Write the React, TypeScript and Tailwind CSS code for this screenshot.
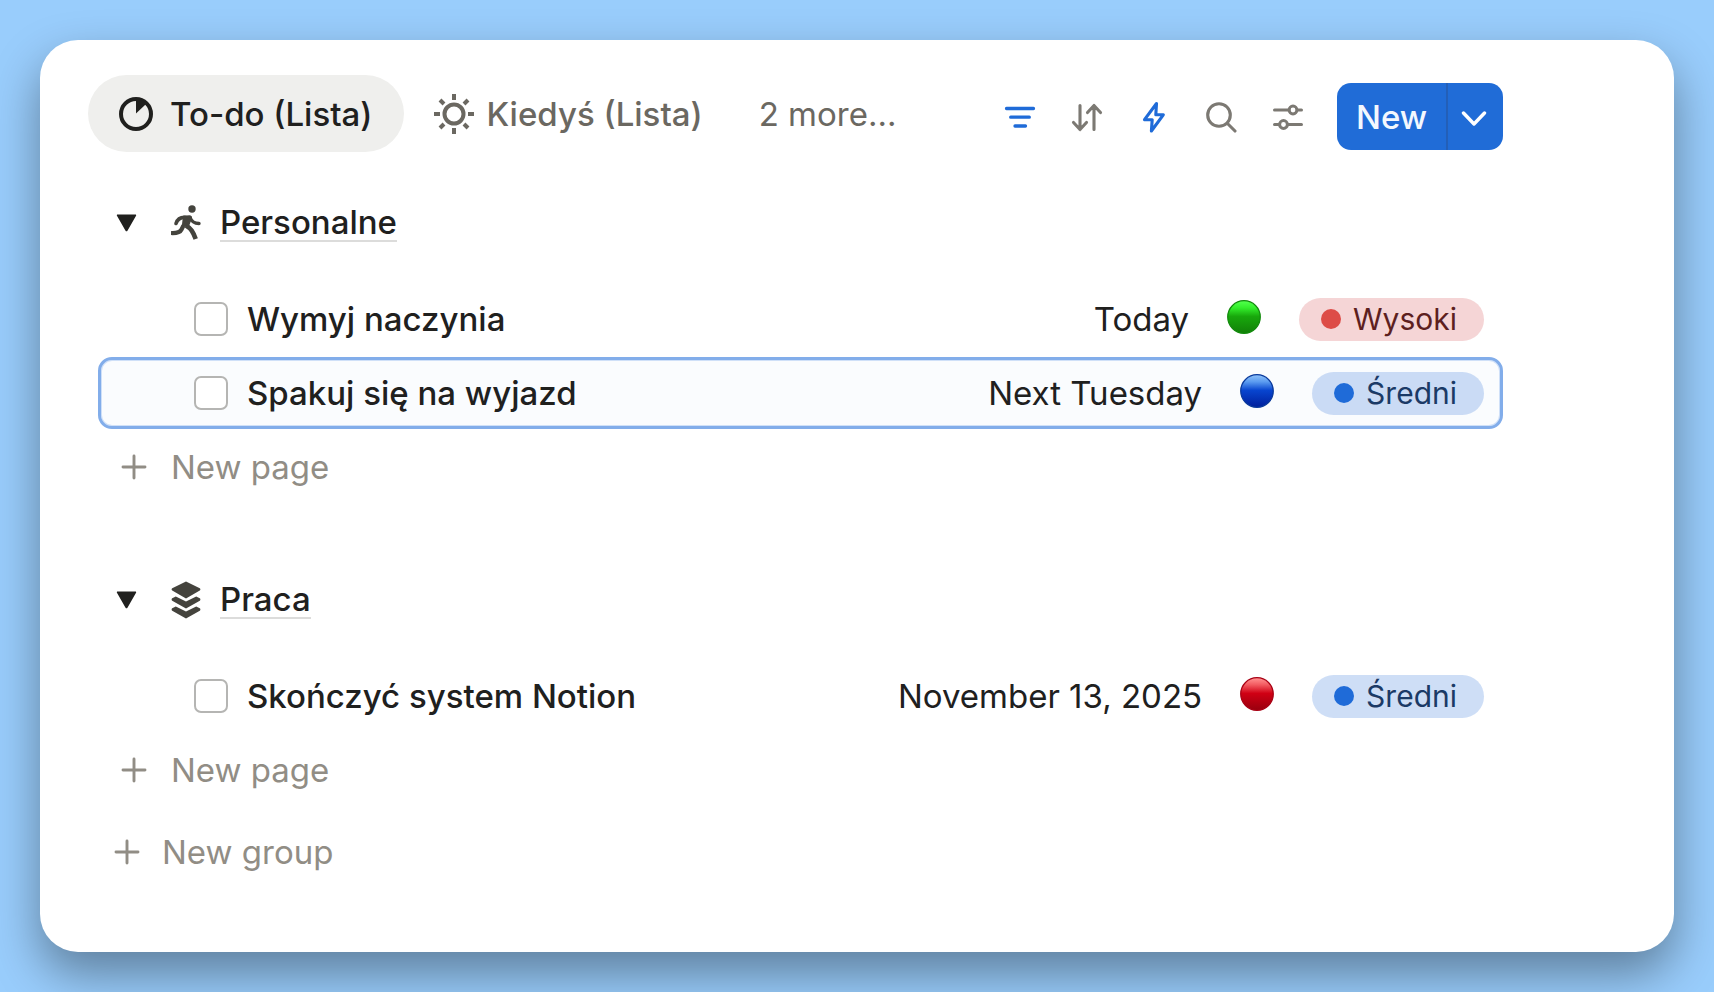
import { useState } from "react";
import type { ReactNode } from "react";
import clsx from "clsx";

type Priority = "Wysoki" | "Średni";
type Light = "green" | "blue" | "red";

interface Task {
  id: string;
  title: string;
  date: string;
  light: Light;
  priority: Priority;
  selected?: boolean;
}

interface Group {
  id: string;
  name: string;
  icon: ReactNode;
  tasks: Task[];
}

const LIGHTS: Record<Light, { edge: string; stops: [string, string, string, string] }> = {
  green: { edge: "#128a0c", stops: ["#4dff48", "#33ee2b", "#18a80c", "#128008"] },
  blue: { edge: "#0a3a9c", stops: ["#86bbf8", "#5a9bf0", "#0845cf", "#001f9c"] },
  red: { edge: "#a80014", stops: ["#ff8a8a", "#f25a60", "#d00014", "#98000e"] },
};

function ClockIcon() {
  return (
    <svg width="34" height="34" viewBox="0 0 34 34" fill="none" aria-hidden="true">
      <circle cx="17" cy="17" r="15" stroke="currentColor" strokeWidth="4" />
      <path d="M17 2v14.5L27.6 6.4A15 15 0 0 0 17 2Z" fill="currentColor" />
    </svg>
  );
}

function SunIcon() {
  return (
    <svg width="40" height="40" viewBox="0 0 40 40" fill="none" stroke="currentColor" strokeWidth="4" aria-hidden="true">
      <circle cx="20" cy="20" r="9.5" />
      <path d="M20 0v6M20 34v6M0 20h6M34 20h6M6 6l4 4M30 30l4 4M6 34l4-4M30 10l4-4" />
    </svg>
  );
}

function FilterIcon() {
  return (
    <svg width="32" height="32" viewBox="0 0 32 32" fill="none" stroke="currentColor" strokeWidth="3.3" strokeLinecap="round" aria-hidden="true">
      <path d="M2.5 7.5h27M6.700 16.200h18.600M11 25h10.500" />
    </svg>
  );
}

function SortIcon() {
  return (
    <svg width="32" height="32" viewBox="0 0 32 32" fill="none" stroke="currentColor" strokeWidth="3.1" strokeLinecap="round" strokeLinejoin="round" aria-hidden="true">
      <path d="M9 4.500v24M2.500 21.500l6.500 7 6.500-7M23 28.500V4.500M16.500 11.500l6.500-7 6.500 7" />
    </svg>
  );
}

function BoltIcon() {
  return (
    <svg width="32" height="32" viewBox="0 0 32 32" fill="none" stroke="currentColor" strokeWidth="3.100" strokeLinejoin="round" aria-hidden="true">
      <path d="M18.500 2.500L6.500 18.700h7.700l-.8 11.300L25.300 13.800h-7.500z" />
    </svg>
  );
}

function SearchIcon() {
  return (
    <svg width="32" height="32" viewBox="0 0 32 32" fill="none" stroke="currentColor" strokeWidth="3.100" strokeLinecap="round" aria-hidden="true">
      <circle cx="14" cy="14" r="11.300" />
      <path d="M22.500 22.500l7.500 7.500" />
    </svg>
  );
}

function SettingsIcon() {
  return (
    <svg width="32" height="32" viewBox="0 0 32 32" fill="none" stroke="currentColor" strokeWidth="3" strokeLinecap="round" aria-hidden="true">
      <path d="M2.500 9h14.500M26 9h3.500M2.500 23.500h4M16 23.500h13.500" />
      <circle cx="21" cy="9" r="3.900" />
      <circle cx="11.500" cy="23.500" r="3.900" />
    </svg>
  );
}

function RunnerIcon() {
  return (
    <svg width="30" height="36" viewBox="0 0 30 36" aria-hidden="true">
      <circle cx="21" cy="4" r="3.700" fill="currentColor" />
      <path d="M5 18.500C6.500 14 10 12 15 12.500" fill="none" stroke="currentColor" strokeWidth="3.600" strokeLinecap="round" />
      <path d="M19 12.500c1.500 4 4 6 9 6" fill="none" stroke="currentColor" strokeWidth="3.400" strokeLinecap="round" />
      <path d="M12 10.800l6.500-.5c2.300.300 3 2 2.200 3.700L17.500 22.500l-6.700-1.500z" fill="currentColor" />
      <path d="M0 28c6 .3 9-.3 10.500-3.500l2-4" fill="none" stroke="currentColor" strokeWidth="4.200" />
      <path d="M15 20.500c5 3 7 6 9.700 13.500" fill="none" stroke="currentColor" strokeWidth="4.600" />
    </svg>
  );
}

function StackIcon() {
  return (
    <svg width="30" height="38" viewBox="0 0 30 38" fill="currentColor" aria-hidden="true">
      <path d="M15 .5l13.800 6.700c.8.400.8 1.900 0 2.300L15 17.500 1.200 9.500c-.8-.4-.8-1.900 0-2.300z" />
      <path d="M1.200 17.200l3.600-1.700L15 20.500l10.200-5 3.600 1.700c.8.400.8 2.100 0 2.500L15 27.500 1.200 19.700c-.8-.4-.8-2.100 0-2.500z" />
      <path d="M1.200 27.200l3.600-1.700L15 30.500l10.200-5 3.600 1.700c.8.400.8 2.100 0 2.500L15 37.500 1.200 29.700c-.8-.4-.8-2.100 0-2.500z" />
    </svg>
  );
}

function PlusIcon() {
  return (
    <svg width="26" height="26" viewBox="0 0 26 26" fill="none" stroke="currentColor" strokeWidth="2.900" strokeLinecap="round" aria-hidden="true">
      <path d="M13 2v22M2 13h22" />
    </svg>
  );
}

function StatusLight({ color }: { color: Light }) {
  const { edge, stops } = LIGHTS[color];
  return (
    <svg className="-mt-1" width="34" height="34" viewBox="0 0 34 34" role="img" aria-label={color}>
      <defs>
        <linearGradient id={`light-${color}`} x1="0" y1="0" x2="0" y2="1">
          <stop offset="0.04" stopColor={stops[0]} />
          <stop offset="0.22" stopColor={stops[1]} />
          <stop offset="0.48" stopColor={stops[2]} />
          <stop offset="1" stopColor={stops[3]} />
        </linearGradient>
      </defs>
      <circle cx="17" cy="17" r="16.300" fill={`url(#light-${color})`} stroke={edge} strokeWidth="1.200" />
    </svg>
  );
}

function PriorityTag({ value }: { value: Priority }) {
  const high = value === "Wysoki";
  return (
    <span
      className={clsx(
        "flex h-[43px] items-center gap-3 rounded-full pl-[22px] pr-[27px] text-[30px] leading-none",
        high ? "bg-[#f5d5d6] text-[#5d1f1f]" : "bg-[#1f6bd8]/22 text-[#1b3a66]",
      )}
    >
      <span className={clsx("h-5 w-5 rounded-full", high ? "bg-[#dd4c47]" : "bg-[#1f6bd8]")} />
      {value}
    </span>
  );
}

function TaskRow({ task }: { task: Task }) {
  const [done, setDone] = useState(false);

  return (
    <li
      className={clsx(
        "flex h-[72px] items-center rounded-[14px] border-[3px] pl-[93px] pr-4",
        task.selected
          ? "border-[#82adea] bg-[#fafcfe] shadow-[inset_0_0_0_1px_#cfe0f8]"
          : "border-transparent",
      )}
    >
      <input
        id={task.id}
        type="checkbox"
        checked={done}
        onChange={(e) => setDone(e.target.checked)}
        className="h-[34px] w-[34px] shrink-0 appearance-none rounded-[7px] border-2 border-[#b5b5b3] bg-white checked:border-[#1f6bd8] checked:bg-[#1f6bd8]"
      />
      <label htmlFor={task.id} className="ml-[19px] font-medium">
        {task.title}
      </label>
      <div className="ml-auto flex items-center gap-[38px]">
        <span>{task.date}</span>
        <StatusLight color={task.light} />
        <PriorityTag value={task.priority} />
      </div>
    </li>
  );
}

function GroupSection({ group }: { group: Group }) {
  const [open, setOpen] = useState(true);

  return (
    <section>
      <div className="flex h-[72px] items-center pl-[18px]">
        <button type="button" aria-label={`Toggle ${group.name}`} onClick={() => setOpen(!open)}>
          <svg width="21" height="18" viewBox="0 0 22 18" fill="#20201e" className={clsx(!open && "-rotate-90")}>
            <path d="M1.800 0h18.400c.9 0 1.200.7.800 1.400l-9 15.600c-.5.900-1.500.9-2 0L1 1.400C.6.700.9 0 1.800 0z" />
          </svg>
        </button>
        <span className="ml-[34px] mr-[19px] text-[#44433d]">{group.icon}</span>
        <h2>
          <a href="#" className="block border-b-2 border-[#dcdcdb] font-medium leading-9">
            {group.name}
          </a>
        </h2>
      </div>
      {open && (
        <>
          <ul className="mt-6 flex flex-col gap-0.5">
            {group.tasks.map((task) => (
              <TaskRow key={task.id} task={task} />
            ))}
          </ul>
          <button type="button" className="mt-0.5 flex h-[72px] items-center gap-6 pl-[23px] text-[#918d85]">
            <PlusIcon />
            New page
          </button>
        </>
      )}
    </section>
  );
}

const GROUPS: Group[] = [
  {
    id: "personal",
    name: "Personalne",
    icon: <RunnerIcon />,
    tasks: [
      { id: "dishes", title: "Wymyj naczynia", date: "Today", light: "green", priority: "Wysoki" },
      { id: "packing", title: "Spakuj się na wyjazd", date: "Next Tuesday", light: "blue", priority: "Średni", selected: true },
    ],
  },
  {
    id: "work",
    name: "Praca",
    icon: <StackIcon />,
    tasks: [
      { id: "notion", title: "Skończyć system Notion", date: "November 13, 2025", light: "red", priority: "Średni" },
    ],
  },
];

const TOOLS = [
  { label: "Filter", icon: <FilterIcon />, active: true },
  { label: "Sort", icon: <SortIcon />, active: false },
  { label: "Automations", icon: <BoltIcon />, active: true },
  { label: "Search", icon: <SearchIcon />, active: false },
  { label: "Settings", icon: <SettingsIcon />, active: false },
];

export default function App() {
  return (
    <div className="flex min-h-screen bg-[#99cdfc] p-10 font-['Inter',sans-serif] text-[33px] leading-10 text-[#20201e]">
      <main className="flex-1 rounded-[38px] bg-white pb-16 pl-12 pr-[171px] pt-[35px] shadow-[0_22px_48px_rgba(0,0,0,0.38)]">
        <header className="flex items-start">
          <nav className="flex items-center whitespace-nowrap text-[#6b6861]">
            <button type="button" className="flex h-[77px] items-center gap-[17px] rounded-full bg-[#efefed] px-[31px] font-medium text-[#20201e]">
              <ClockIcon />
              To-do (Lista)
            </button>
            <button type="button" className="ml-[30px] flex items-center gap-[13px] font-medium">
              <SunIcon />
              Kiedyś (Lista)
            </button>
            <button type="button" className="ml-14">
              2 more...
            </button>
          </nav>
          <div className="ml-auto mt-2 flex items-center">
            {TOOLS.map((tool) => (
              <button
                key={tool.label}
                type="button"
                aria-label={tool.label}
                className={clsx(
                  "flex h-[67px] w-[67px] items-center justify-center",
                  tool.active ? "text-[#1f6bd8]" : "text-[#7c7973]",
                )}
              >
                {tool.icon}
              </button>
            ))}
            <div className="ml-4 flex h-[67px] overflow-hidden rounded-[14px] bg-[#206cd7] text-[#f3f8fe]">
              <button type="button" className="w-[109px] font-medium">
                New
              </button>
              <button
                type="button"
                aria-label="More options"
                className="flex w-[57px] items-center justify-center border-l-2 border-[#235fb8] pr-1"
              >
                <svg width="26" height="16" viewBox="0 0 26 16" fill="none" stroke="white" strokeWidth="3.400" strokeLinecap="round" strokeLinejoin="round" className="mt-1">
                  <path d="M2.500 2l10.500 11L23.500 2" />
                </svg>
              </button>
            </div>
          </div>
        </header>

        <div className="mt-[35px] flex flex-col gap-[61px] pl-[10px]">
          {GROUPS.map((group) => (
            <GroupSection key={group.id} group={group} />
          ))}
        </div>

        <button type="button" className="mt-[10px] flex h-[72px] items-center gap-[22px] pl-[26px] text-[#918d85]">
          <PlusIcon />
          New group
        </button>
      </main>
    </div>
  );
}
